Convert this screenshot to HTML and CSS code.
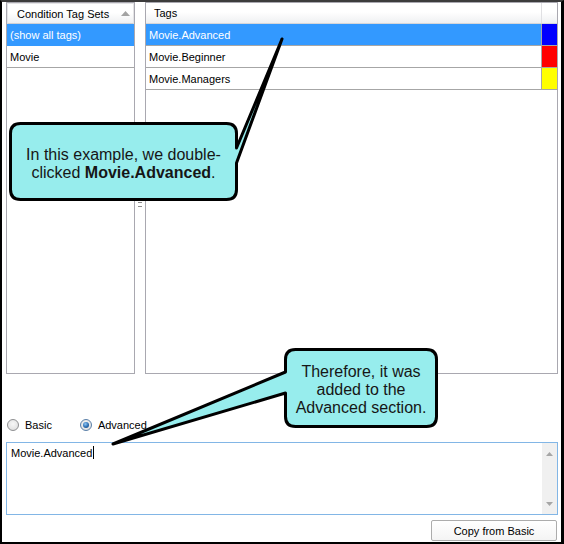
FILE: index.html
```html
<!DOCTYPE html>
<html>
<head>
<meta charset="utf-8">
<link rel="stylesheet" href="styles.css">
</head>
<body>
<div class="window">
  <div class="lists">
    <div class="panel sets">
      <div class="hdr hdr-sets">
        <span class="hdr-text">Condition Tag Sets</span>
        <svg class="sort" width="9" height="5" viewBox="0 0 9 5"><path d="M4.5 0 L9 5 L0 5 Z" fill="#a3a3a3"/></svg>
      </div>
      <div class="row sel">(show all tags)</div>
      <div class="row">Movie</div>
    </div>
    <div class="splitter"><span class="grip"></span></div>
    <div class="panel tags">
      <div class="hdr hdr-tags">
        <span class="hdr-text name">Tags</span>
        <span class="hdr-col"></span>
      </div>
      <div class="row trow sel"><span class="name">Movie.Advanced</span><span class="swatch" style="background:#0000ff"></span></div>
      <div class="row trow"><span class="name">Movie.Beginner</span><span class="swatch" style="background:#ff0000"></span></div>
      <div class="row trow"><span class="name">Movie.Managers</span><span class="swatch" style="background:#ffff00"></span></div>
    </div>
  </div>

  <div class="radios">
    <label class="opt opt-basic"><span class="radio"></span>Basic</label>
    <label class="opt"><span class="radio checked"><span class="dot"></span></span>Advanced</label>
  </div>

  <div class="editor">
    <div class="edit-text">Movie.Advanced<span class="caret"></span></div>
    <div class="vscroll">
      <svg width="7" height="4" viewBox="0 0 7 4"><path d="M3.5 0 L7 4 L0 4 Z" fill="#a6a6a6"/></svg>
      <svg width="7" height="4" viewBox="0 0 7 4"><path d="M0 0 L7 0 L3.5 4 Z" fill="#a6a6a6"/></svg>
    </div>
  </div>

  <div class="actions">
    <button class="btn">Copy from Basic</button>
  </div>

  <svg class="callouts" width="564" height="544" viewBox="0 0 564 544">
    <path d="M20.5 123.5 H226.5 Q236.5 123.5 236.5 133.5 V148 L282 39 L236.5 163 V189.5 Q236.5 199.5 226.5 199.5 H20.5 Q10.5 199.5 10.5 189.5 V133.5 Q10.5 123.5 20.5 123.5 Z" fill="#97eded" stroke="#000" stroke-width="3" stroke-linejoin="round"/>
    <path d="M295.5 349.5 H426.5 Q436.5 349.5 436.5 359.5 V416.5 Q436.5 426.5 426.5 426.5 H295.5 Q285.5 426.5 285.5 416.5 V393 L113 444 L285.5 372 V359.5 Q285.5 349.5 295.5 349.5 Z" fill="#97eded" stroke="#000" stroke-width="3" stroke-linejoin="round"/>
  </svg>
  <div class="note note-1"><p class="note-text">In this example, we double-<br>clicked <b>Movie.Advanced</b>.</p></div>
  <div class="note note-2"><p class="note-text">Therefore, it was<br>added to the<br>Advanced section.</p></div>
</div>
</body>
</html>
```

FILE: styles.css
```css
body {
  margin: 0;
  background: #fff;
}

.window {
  position: relative;
  width: 564px;
  height: 544px;
  box-sizing: border-box;
  border-style: solid;
  border-color: #3c3c3c #000 #000 #000;
  border-width: 2px 3px 2px 2px;
  background: #fff;
  display: flex;
  flex-direction: column;
  overflow: hidden;
  font-family: "Liberation Sans", Arial, sans-serif;
  font-size: 11px;
  color: #000;
}

.lists {
  display: flex;
  height: 372px;
  padding-left: 4px;
}

.panel {
  box-sizing: border-box;
  border: 1px solid #a9a8b0;
  display: flex;
  flex-direction: column;
  background: #fff;
}

.sets { width: 129px; }
.tags { width: 413px; }

.splitter {
  width: 10px;
  padding-top: 200px;
  box-sizing: border-box;
  display: flex;
  justify-content: center;
}

.grip {
  width: 4px;
  height: 3px;
  border-top: 1px solid #8c8c8c;
  border-bottom: 1px solid #8c8c8c;
}

.hdr {
  height: 21px;
  box-sizing: border-box;
  border-bottom: 1px solid #d6d6d9;
  background: linear-gradient(#ffffff 0%, #ffffff 45%, #eff0f2 100%);
  display: flex;
  align-items: center;
}

.hdr-sets {
  padding-left: 9px;
  padding-right: 3px;
  justify-content: space-between;
  border: 1px solid #e4e4e6;
  border-bottom-color: #d0d0d4;
}

.hdr-tags {
  padding-left: 8px;
  align-items: stretch;
}

.hdr-tags .hdr-text {
  display: flex;
  align-items: center;
}

.hdr-col {
  width: 15px;
  border-left: 1px solid #e0e0e3;
}

.sort { display: block; }

.row {
  height: 22px;
  box-sizing: border-box;
  border-bottom: 1px solid #a6a6a6;
  padding-left: 3px;
  display: flex;
  align-items: center;
  white-space: nowrap;
}

.sets .row.sel { border-bottom-color: #3399ff; }

.sel {
  background: #3399ff;
  color: #fff;
}

.trow {
  align-items: stretch;
  padding-left: 0;
}

.trow .name {
  flex: 1;
  display: flex;
  align-items: center;
  padding-left: 3px;
}

.hdr-tags .name { flex: 1; }

.swatch {
  width: 15px;
  border-left: 1px solid #a6a6a6;
}

.radios {
  height: 16px;
  margin-top: 43px;
  padding-left: 5px;
  display: flex;
  align-items: center;
}

.opt {
  display: flex;
  align-items: center;
  gap: 6px;
}

.opt-basic { margin-right: 28px; }

.radio {
  width: 12px;
  height: 12px;
  box-sizing: border-box;
  border-radius: 50%;
  border: 1px solid #8e8f91;
  background: radial-gradient(circle at 50% 40%, #f7f7f7 0%, #e6e6e6 60%, #d4d4d4 100%);
  display: flex;
  align-items: center;
  justify-content: center;
}

.checked { border-color: #5a7fa8; }

.dot {
  width: 6px;
  height: 6px;
  border-radius: 50%;
  background: radial-gradient(circle at 40% 35%, #8ec6f5 0%, #2b6cb0 55%, #173f6e 100%);
}

.editor {
  margin-top: 9px;
  margin-left: 4px;
  width: 552px;
  height: 73px;
  box-sizing: border-box;
  border: 1px solid #82b6e6;
  display: flex;
}

.edit-text {
  flex: 1;
  padding: 3px 4px;
  line-height: 14px;
  display: flex;
  align-items: flex-start;
}

.caret {
  display: inline-block;
  width: 1px;
  height: 13px;
  background: #000;
  margin-left: 1px;
}

.vscroll {
  width: 15px;
  background: #f0f0f0;
  display: flex;
  flex-direction: column;
  align-items: center;
  justify-content: space-between;
  padding: 9px 0 8px;
}

.vscroll svg { display: block; }

.actions {
  margin-top: 5px;
  padding-right: 4px;
  display: flex;
  justify-content: flex-end;
}

.btn {
  width: 126px;
  height: 21px;
  box-sizing: border-box;
  border: 1px solid #acacac;
  border-radius: 2px;
  background: linear-gradient(#ffffff, #f4f4f4);
  font-family: "Liberation Sans", Arial, sans-serif;
  font-size: 11px;
  color: #000;
  padding: 0;
}

.callouts {
  position: absolute;
  left: -2px;
  top: -2px;
  pointer-events: none;
}

.note {
  position: absolute;
  display: flex;
  align-items: center;
  justify-content: center;
  box-sizing: border-box;
  font-family: "Liberation Sans", Arial, sans-serif;
  font-size: 16px;
  line-height: 18px;
  color: #161616;
}

.note-text {
  margin: 0;
  text-align: center;
  white-space: nowrap;
}

.note-1 {
  left: 8px;
  top: 121px;
  width: 227px;
  height: 77px;
  padding-top: 5px;
}

.note-2 {
  left: 283px;
  top: 347px;
  width: 152px;
  height: 78px;
  padding-top: 4px;
}
```
